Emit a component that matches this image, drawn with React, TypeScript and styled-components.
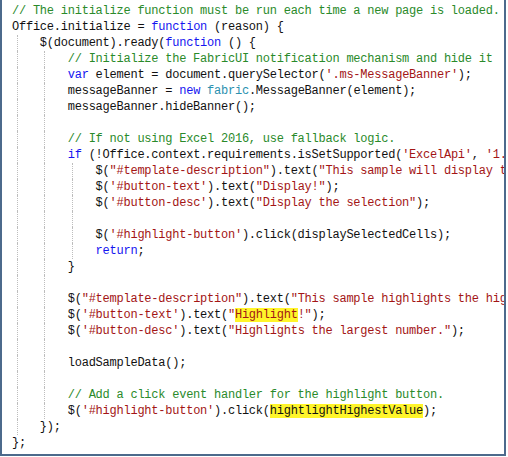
import React from "react";
import styled, { createGlobalStyle } from "styled-components";

const Global = createGlobalStyle`
  html, body { margin: 0; padding: 0; background: #ffffff; }
  #root { width: 508px; height: 457px; }
`;

type Kind = "p" | "k" | "c" | "s" | "t" | "h" | "hs";
type Tok = [Kind, string];

const colors: Record<Kind, string> = {
  p: "#111111",
  k: "#1515f0",
  c: "#2a8a2a",
  s: "#a31515",
  t: "#2b91af",
  h: "#111111",
  hs: "#a31515",
};

const Frame = styled.div`
  box-sizing: border-box;
  width: 506px;
  height: 456px;
  border-left: 2px solid #4c6a8c;
  border-right: 2px solid #4c6a8c;
  border-bottom: 2px solid #4c6a8c;
  background: #ffffff;
  overflow: hidden;
  padding: 3px 0 0 10px;
`;

const Code = styled.div`
  display: flex;
  flex-direction: column;
  font-family: "Liberation Mono", "DejaVu Sans Mono", monospace;
  font-size: 12px;
  letter-spacing: -0.235px;
  line-height: 16px;
  color: #111;
`;

const Line = styled.div`
  position: relative;
  height: 16px;
  white-space: pre;
`;

const Guide = styled.span<{ $col: number }>`
  position: absolute;
  top: 0;
  bottom: 0;
  left: ${(p) => 4.5 + p.$col * 27.6}px;
  width: 0;
  border-left: 1px dotted #bdbdbd;
`;

const Tk = styled.span<{ $kind: Kind }>`
  color: ${(p) => colors[p.$kind]};
  background: ${(p) => (p.$kind === "h" || p.$kind === "hs" ? "#fff52a" : "transparent")};
`;

const lines: { guides: number[]; toks: Tok[] }[] = [
  { guides: [], toks: [["c", "// The initialize function must be run each time a new page is loaded."]] },
  { guides: [], toks: [["p", "Office.initialize = "], ["k", "function"], ["p", " (reason) {"]] },
  { guides: [0], toks: [["p", "    $(document).ready("], ["k", "function"], ["p", " () {"]] },
  { guides: [0, 1], toks: [["c", "        // Initialize the FabricUI notification mechanism and hide it"]] },
  { guides: [0, 1], toks: [["p", "        "], ["k", "var"], ["p", " element = document.querySelector("], ["s", "'.ms-MessageBanner'"], ["p", ");"]] },
  { guides: [0, 1], toks: [["p", "        messageBanner = "], ["k", "new"], ["p", " "], ["t", "fabric"], ["p", ".MessageBanner(element);"]] },
  { guides: [0, 1], toks: [["p", "        messageBanner.hideBanner();"]] },
  { guides: [0, 1], toks: [] },
  { guides: [0, 1], toks: [["c", "        // If not using Excel 2016, use fallback logic."]] },
  { guides: [0, 1], toks: [["p", "        "], ["k", "if"], ["p", " (!Office.context.requirements.isSetSupported("], ["s", "'ExcelApi'"], ["p", ", "], ["s", "'1.1'"], ["p", ")) {"]] },
  { guides: [0, 1, 2], toks: [["p", "            $("], ["s", "\"#template-description\""], ["p", ").text("], ["s", "\"This sample will display the value of the cells you have selected in the spreadsheet.\""], ["p", ");"]] },
  { guides: [0, 1, 2], toks: [["p", "            $("], ["s", "'#button-text'"], ["p", ").text("], ["s", "\"Display!\""], ["p", ");"]] },
  { guides: [0, 1, 2], toks: [["p", "            $("], ["s", "'#button-desc'"], ["p", ").text("], ["s", "\"Display the selection\""], ["p", ");"]] },
  { guides: [0, 1, 2], toks: [] },
  { guides: [0, 1, 2], toks: [["p", "            $("], ["s", "'#highlight-button'"], ["p", ").click(displaySelectedCells);"]] },
  { guides: [0, 1, 2], toks: [["p", "            "], ["k", "return"], ["p", ";"]] },
  { guides: [0, 1], toks: [["p", "        }"]] },
  { guides: [0, 1], toks: [] },
  { guides: [0, 1], toks: [["p", "        $("], ["s", "\"#template-description\""], ["p", ").text("], ["s", "\"This sample highlights the highest value from the cells you have selected in the spreadsheet.\""], ["p", ");"]] },
  { guides: [0, 1], toks: [["p", "        $("], ["s", "'#button-text'"], ["p", ").text("], ["s", "\""], ["hs", "Highlight"], ["s", "!\""], ["p", ");"]] },
  { guides: [0, 1], toks: [["p", "        $("], ["s", "'#button-desc'"], ["p", ").text("], ["s", "\"Highlights the largest number.\""], ["p", ");"]] },
  { guides: [0, 1], toks: [] },
  { guides: [0, 1], toks: [["p", "        loadSampleData();"]] },
  { guides: [0, 1], toks: [] },
  { guides: [0, 1], toks: [["c", "        // Add a click event handler for the highlight button."]] },
  { guides: [0, 1], toks: [["p", "        $("], ["s", "'#highlight-button'"], ["p", ").click("], ["h", "hightlightHighestValue"], ["p", ");"]] },
  { guides: [0], toks: [["p", "    });"]] },
  { guides: [], toks: [["p", "};"]] },
];

export default function App() {
  return (
    <>
      <Global />
      <Frame>
        <Code>
          {lines.map((l, i) => (
            <Line key={i}>
              {l.guides.map((g) => (
                <Guide key={g} $col={g} />
              ))}
              {l.toks.map((t, j) => (
                <Tk key={j} $kind={t[0]}>
                  {t[1]}
                </Tk>
              ))}
            </Line>
          ))}
        </Code>
      </Frame>
    </>
  );
}
